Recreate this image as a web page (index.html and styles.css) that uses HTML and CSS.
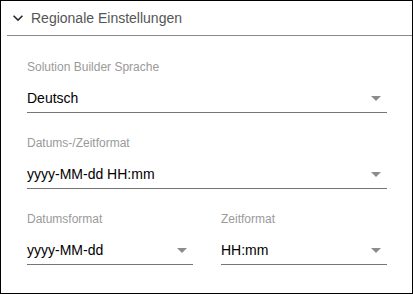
FILE: index.html
```html
<!DOCTYPE html>
<html lang="de">
<head>
<meta charset="utf-8">
<link rel="stylesheet" href="styles.css">
</head>
<body>
<div class="panel">
  <div class="header">
    <svg class="chev" viewBox="0 0 24 24" width="20" height="20"><path d="M16.59 8.59L12 13.17 7.41 8.59 6 10l6 6 6-6z" fill="#2b2b2b"/></svg>
    <span class="title">Regionale Einstellungen</span>
  </div>
  <div class="form">
    <div class="field">
      <div class="label">Solution Builder Sprache</div>
      <div class="select"><span class="value">Deutsch</span><span class="arrow"></span></div>
    </div>
    <div class="field">
      <div class="label">Datums-/Zeitformat</div>
      <div class="select"><span class="value">yyyy-MM-dd HH:mm</span><span class="arrow"></span></div>
    </div>
    <div class="row">
      <div class="field">
        <div class="label">Datumsformat</div>
        <div class="select"><span class="value">yyyy-MM-dd</span><span class="arrow"></span></div>
      </div>
      <div class="field">
        <div class="label">Zeitformat</div>
        <div class="select"><span class="value">HH:mm</span><span class="arrow"></span></div>
      </div>
    </div>
  </div>
</div>
</body>
</html>
```
FILE: styles.css
```css
html, body {
  margin: 0;
  padding: 0;
  background: #fff;
}
body {
  font-family: "Liberation Sans", Arial, sans-serif;
}
.panel {
  width: 413px;
  height: 294px;
  box-sizing: border-box;
  border: 1px solid #000;
  background: #fff;
}
.header {
  height: 34px;
  margin-left: 6px;
  padding-left: 1px;
  display: flex;
  align-items: center;
  border-bottom: 1px solid #8a8a8a;
}
.chev {
  display: block;
  margin-right: 3px;
}
.title {
  font-size: 14px;
  color: #555;
  line-height: 20px;
}
.form {
  padding: 23px 25px 0 26px;
  display: flex;
  flex-direction: column;
  gap: 22px;
}
.row {
  display: flex;
  gap: 28px;
}
.row .field {
  flex: 1;
}
.label {
  font-size: 12px;
  line-height: 16px;
  color: #9a9a9a;
  margin-bottom: 13px;
}
.select {
  display: flex;
  align-items: center;
  justify-content: space-between;
  height: 20px;
  padding-bottom: 4px;
  border-bottom: 1px solid #757575;
}
.value {
  font-size: 14px;
  line-height: 20px;
  color: #000;
}
.arrow {
  width: 0;
  height: 0;
  border-left: 5px solid transparent;
  border-right: 5px solid transparent;
  border-top: 5px solid #8c8c8c;
  margin-right: 6px;
}
```
